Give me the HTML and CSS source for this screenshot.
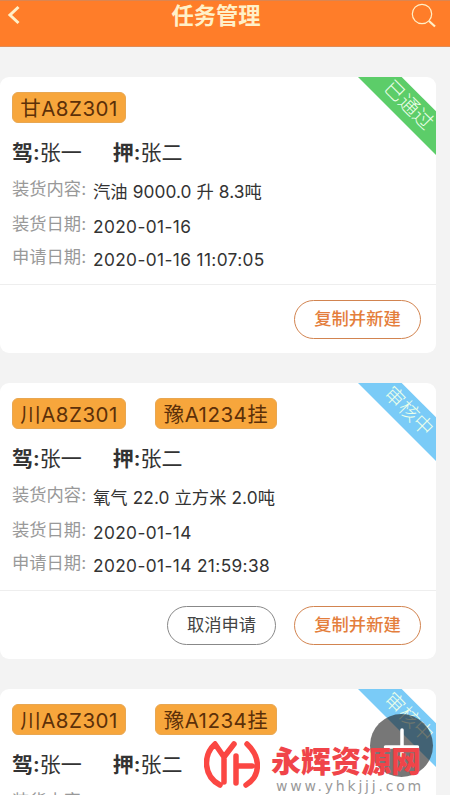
FILE: index.html
```html
<!DOCTYPE html>
<html lang="zh-CN">
<head>
<meta charset="utf-8">
<title>任务管理</title>
<link rel="stylesheet" href="styles.css">
</head>
<body>
<div class="screen">
  <header class="bar">
    <svg class="back" viewBox="0 0 14 20"><path d="M11.500 2 3 10l8.500 8"/></svg>
    <h1>任务管理</h1>
    <svg class="search" viewBox="0 0 26 26"><circle cx="11" cy="11" r="9.700"/><path class="handle" d="m18 18 6 5.500"/></svg>
  </header>
  <main class="list">
    <article class="card">
      <div class="ribbon passed"></div><span class="status">已通过</span>
      <div class="body">
        <div class="plates"><span class="plate p1">甘A8Z301</span></div>
        <div class="people"><span><b>驾:</b>张一</span><span><b>押:</b>张二</span></div>
        <dl>
          <dt>装货内容:</dt><dd class="first">汽油 9000.0 升 8.3吨</dd>
          <dt>装货日期:</dt><dd>2020-01-16</dd>
          <dt>申请日期:</dt><dd>2020-01-16 11:07:05</dd>
        </dl>
      </div>
      <footer class="actions"><button class="copy">复制并新建</button></footer>
    </article>
    <article class="card">
      <div class="ribbon pending"></div><span class="status">审核中</span>
      <div class="body">
        <div class="plates"><span class="plate p1">川A8Z301</span><span class="plate p2">豫A1234挂</span></div>
        <div class="people"><span><b>驾:</b>张一</span><span><b>押:</b>张二</span></div>
        <dl>
          <dt>装货内容:</dt><dd class="first">氧气 22.0 立方米 2.0吨</dd>
          <dt>装货日期:</dt><dd>2020-01-14</dd>
          <dt>申请日期:</dt><dd>2020-01-14 21:59:38</dd>
        </dl>
      </div>
      <footer class="actions"><button class="cancel">取消申请</button><button class="copy">复制并新建</button></footer>
    </article>
    <article class="card">
      <div class="ribbon pending"></div><span class="status">审核中</span>
      <div class="body">
        <div class="plates"><span class="plate p1">川A8Z301</span><span class="plate p2">豫A1234挂</span></div>
        <div class="people"><span><b>驾:</b>张一</span><span><b>押:</b>张二</span></div>
        <dl><dt>装货内容:</dt><dd class="first">氧气 22.0 立方米 2.0吨</dd></dl>
      </div>
    </article>
  </main>
  <div class="add"><svg viewBox="0 0 63 63"><path d="M32 16v35M15.500 33h32"/></svg></div>
</div>
<div class="mark">
  <svg class="logo" viewBox="0 0 56 50"><path d="M11 5C-1 16-1 37 16 46M11 5l9 13L30 5M20 18v25M32 17v27M33 27h15M43 5c14 13 14 32-1 41"/></svg>
  <div class="words"><strong>永辉资源网</strong><span>www.yhkjjj.com</span></div>
</div>
</body>
</html>
```

FILE: styles.css
```css
* { box-sizing: border-box; }
body { margin: 0; width: 450px; height: 800px; overflow: hidden; position: relative; background: #fff; font-family: Inter, "Noto Sans CJK SC", sans-serif; color: #333; }
.screen { position: relative; height: 795px; overflow: hidden; background: #f3f3f3; }
.bar { height: 47px; background: #ff7d29; border-top: 1px solid #dc8550; border-bottom: 1px solid #e18b55; display: flex; justify-content: space-between; padding: 0 13px 0 7px; }
.bar svg { fill: none; stroke: #fff0c8; }
.back { width: 14px; height: 20px; margin-top: 4px; stroke-width: 3; }
.search { width: 26px; height: 26px; margin-top: 2px; stroke-width: 1.2; }
.handle { stroke-width: 2.2; }
h1 { margin: 0; font-size: 22.300px; line-height: 30px; font-weight: 600; color: #fff0c8; }
.list { padding-top: 30px; display: grid; gap: 30px; }
.card { position: relative; overflow: hidden; width: 436px; height: 276px; background: #fff; border-radius: 9px; }
.body { height: 208px; padding: 15px 12px 0; border-bottom: 1px solid #eee; }
.plates { display: flex; gap: 29px; }
.plate { height: 31px; border-radius: 6px; background: #f7a63c; border: 1px solid #e8a752; color: #5c3009; font-size: 20.500px; line-height: 31px; text-align: center; white-space: nowrap; }
.p1 { width: 114px; letter-spacing: .5px; }
.p2 { width: 122px; letter-spacing: .5px; }
.people { display: flex; gap: 31px; margin-top: 14px; font-size: 21px; line-height: 31px; }
.people span { white-space: nowrap; }
.people b { font-weight: 600; }
dl { margin: 4px 0 0; display: grid; grid-template-columns: 81px 1fr; grid-template-rows: 35px 33px 34px; }
dt { color: #999; font-size: 17.300px; line-height: 34px; white-space: nowrap; }
dd { margin: 0; font-size: 17.300px; line-height: 39px; letter-spacing: .38px; white-space: nowrap; }
.first { letter-spacing: .08px; }
.actions { height: 68px; display: flex; justify-content: flex-end; align-items: center; gap: 18px; padding-right: 15px; }
button { height: 39px; padding: 0; border-radius: 20px; background: #fff; font: 500 17.300px/34px Inter, "Noto Sans CJK SC", sans-serif; }
.copy { width: 127px; border: 1px solid #d28450; color: #e47e3c; }
.cancel { width: 109px; border: 1px solid #888; color: #444; font-weight: 400; }
.ribbon { position: absolute; right: 0; top: 0; width: 78px; height: 78px; clip-path: polygon(0 0, 56% 0, 100% 44%, 100% 100%); }
.passed { background: #5ccd69; }
.pending { background: #7acbf7; }
.status { position: absolute; right: -3px; top: 18px; width: 60px; text-align: center; font-size: 20px; line-height: 20px; transform: rotate(45deg); font-weight: 300; white-space: nowrap; color: #ecffe9; }
.add { position: absolute; left: 370px; top: 714px; width: 63px; height: 63px; border-radius: 50%; background: #1c1c1c99; }
.add svg { display: block; fill: none; stroke: #fff; stroke-width: 3.500; stroke-linecap: round; }
.mark { position: absolute; left: 204px; top: 740px; display: flex; }
.logo { width: 56px; height: 50px; margin-top: -1px; fill: none; stroke: #fb4743; stroke-width: 5.500; stroke-linecap: round; stroke-linejoin: round; }
.words { margin-left: 11px; display: flex; flex-direction: column; }
.words strong { color: #f04449; font-size: 30px; line-height: 42px; font-weight: 900; white-space: nowrap; }
.words span { font: 14px/14px "DejaVu Sans", sans-serif; letter-spacing: 2.800px; color: #999; margin: -3px 0 0 5px; white-space: nowrap; }
```
